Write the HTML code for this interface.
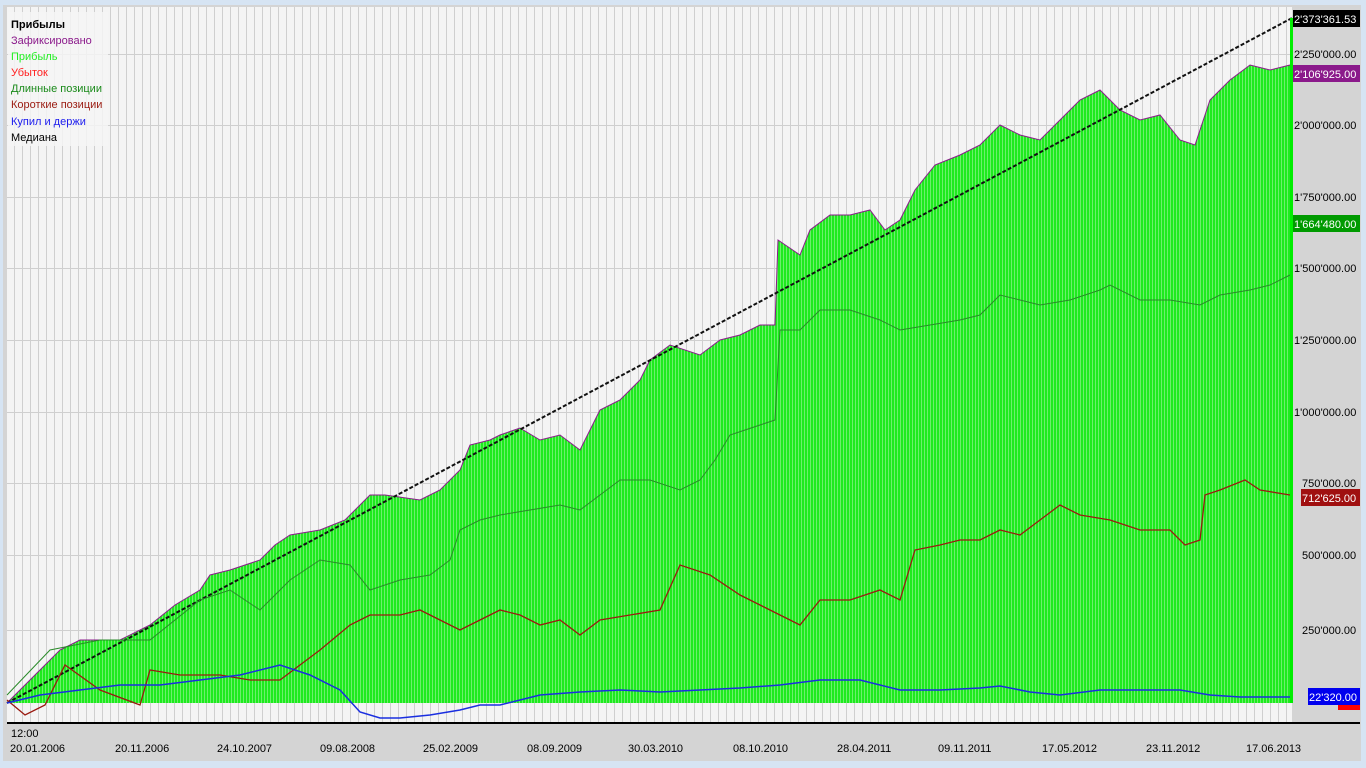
<!DOCTYPE html>
<html><head><meta charset="utf-8"><style>
html,body{margin:0;padding:0;width:1366px;height:768px;overflow:hidden;background:#d6e4f3;}
#frame{position:absolute;left:3px;top:5px;width:1358px;height:756px;background:#d4d4d4;}
svg{position:absolute;left:0;top:0;}
.t{font-family:"Liberation Sans",sans-serif;font-size:11px;}
</style></head><body>
<div id="frame"></div>
<svg width="1366" height="768" xmlns="http://www.w3.org/2000/svg">
<defs>
<pattern id="vg" x="7" y="0" width="8" height="10" patternUnits="userSpaceOnUse">
<rect width="8" height="10" fill="#f4f4f4"/><rect x="7" width="1" height="10" fill="#cfcfcf"/>
</pattern>
<pattern id="gb" x="7" y="0" width="3" height="10" patternUnits="userSpaceOnUse">
<rect width="3" height="10" fill="#1eea1e"/><rect x="2" width="1" height="10" fill="#6cf06c"/>
</pattern>
</defs>
<rect x="7" y="7" width="1285" height="716" fill="url(#vg)"/>
<g stroke="#cfcfcf" stroke-width="1">
<line x1="7" y1="54.5" x2="1292" y2="54.5"/><line x1="7" y1="125.5" x2="1292" y2="125.5"/>
<line x1="7" y1="197.5" x2="1292" y2="197.5"/><line x1="7" y1="268.5" x2="1292" y2="268.5"/>
<line x1="7" y1="340.5" x2="1292" y2="340.5"/><line x1="7" y1="412.5" x2="1292" y2="412.5"/>
<line x1="7" y1="483.5" x2="1292" y2="483.5"/><line x1="7" y1="555.5" x2="1292" y2="555.5"/>
<line x1="7" y1="630.5" x2="1292" y2="630.5"/>
</g>
<polygon fill="url(#gb)" points="7,703 30,680 60,650 80,640 120,640 150,625 175,605 200,590 210,575 230,570 260,560 275,545 290,535 320,530 345,520 370,495 385,495 420,500 440,490 460,470 470,445 490,440 500,435 520,428 540,440 560,435 580,450 590,430 600,410 620,400 640,380 650,360 670,345 700,355 720,340 740,335 760,325 775,325 778,240 800,255 810,230 830,215 850,215 870,210 885,230 900,220 915,190 935,165 960,155 980,145 1000,125 1020,135 1040,140 1060,120 1080,100 1100,90 1120,110 1140,120 1160,115 1180,140 1195,145 1210,100 1230,80 1250,65 1270,70 1290,65 1292,18 1292,703"/>
<polyline fill="none" stroke="#8b1a8b" stroke-width="1" points="7,703 30,680 60,650 80,640 120,640 150,625 175,605 200,590 210,575 230,570 260,560 275,545 290,535 320,530 345,520 370,495 385,495 420,500 440,490 460,470 470,445 490,440 500,435 520,428 540,440 560,435 580,450 590,430 600,410 620,400 640,380 650,360 670,345 700,355 720,340 740,335 760,325 775,325 778,240 800,255 810,230 830,215 850,215 870,210 885,230 900,220 915,190 935,165 960,155 980,145 1000,125 1020,135 1040,140 1060,120 1080,100 1100,90 1120,110 1140,120 1160,115 1180,140 1195,145 1210,100 1230,80 1250,65 1270,70 1290,65"/>
<line x1="7" y1="703" x2="1292" y2="18" stroke="#111" stroke-width="2" stroke-dasharray="4,2"/>
<polyline fill="none" stroke="#2a8a2a" stroke-width="1" points="7,695 50,650 100,640 150,640 200,600 230,590 260,610 290,580 320,560 350,565 370,590 400,580 430,575 450,560 460,530 480,520 500,515 530,510 560,505 580,510 600,495 620,480 650,480 680,490 700,480 715,460 730,435 760,425 775,420 780,330 800,330 820,310 850,310 880,320 900,330 930,325 960,320 980,315 1000,295 1020,300 1040,305 1070,300 1100,290 1110,285 1140,300 1170,300 1200,305 1220,295 1250,290 1270,285 1290,275"/>
<polyline fill="none" stroke="#9a1a10" stroke-width="1.3" points="7,700 25,715 45,705 65,665 100,690 140,705 150,670 180,675 220,675 250,680 280,680 300,665 320,650 350,625 370,615 400,615 420,610 440,620 460,630 480,620 500,610 520,615 540,625 560,620 580,635 600,620 630,615 660,610 680,565 710,575 740,595 770,610 800,625 820,600 850,600 880,590 900,600 915,550 940,545 960,540 980,540 1000,530 1020,535 1040,520 1060,505 1080,515 1110,520 1140,530 1170,530 1185,545 1200,540 1205,495 1220,490 1245,480 1260,490 1290,495"/>
<polyline fill="none" stroke="#1a2ee0" stroke-width="1.5" points="7,703 40,695 80,690 120,685 160,685 200,680 240,675 280,665 310,675 340,690 360,712 380,718 400,718 430,715 460,710 480,705 500,705 520,700 540,695 580,692 620,690 660,692 700,690 740,688 780,685 820,680 860,680 900,690 940,690 980,688 1000,686 1030,692 1060,695 1100,690 1140,690 1180,690 1210,695 1240,697 1290,697"/>
<rect x="1290" y="18" width="3" height="685" fill="#00ee00"/>
<rect x="7" y="722" width="1353" height="2" fill="#000"/>
<rect x="8" y="12" width="100" height="134" fill="#f4f4f4" opacity="0.85"/>
<g class="t">
<text x="11" y="28" font-weight="bold" fill="#000">Прибылы</text>
<text x="11" y="44" fill="#8b1a8b">Зафиксировано</text>
<text x="11" y="60" fill="#22ee22">Прибыль</text>
<text x="11" y="76" fill="#ff2020">Убыток</text>
<text x="11" y="92" fill="#1a8a1a">Длинные позиции</text>
<text x="11" y="108" fill="#9a1a10">Короткие позиции</text>
<text x="11" y="125" fill="#1a1aee">Купил и держи</text>
<text x="11" y="141" fill="#000">Медиана</text>
</g>
<g class="t" fill="#000">
<text x="1294" y="58">2'250'000.00</text>
<text x="1294" y="129">2'000'000.00</text>
<text x="1294" y="201">1'750'000.00</text>
<text x="1294" y="272">1'500'000.00</text>
<text x="1294" y="344">1'250'000.00</text>
<text x="1294" y="416">1'000'000.00</text>
<text x="1302" y="487">750'000.00</text>
<text x="1302" y="559">500'000.00</text>
<text x="1302" y="634">250'000.00</text>
</g>
<rect x="1293" y="10" width="67" height="17" fill="#000"/>
<text class="t" x="1294" y="23" fill="#fff">2'373'361.53</text>
<rect x="1293" y="65" width="67" height="17" fill="#8b1a8b"/>
<text class="t" x="1294" y="78" fill="#fff">2'106'925.00</text>
<rect x="1293" y="215" width="67" height="17" fill="#009a00"/>
<text class="t" x="1294" y="228" fill="#fff">1'664'480.00</text>
<rect x="1301" y="489" width="59" height="17" fill="#a01010"/>
<text class="t" x="1302" y="502" fill="#fff">712'625.00</text>
<rect x="1338" y="702" width="22" height="8" fill="#ff0000"/>
<rect x="1308" y="688" width="52" height="17" fill="#0000ee"/>
<text class="t" x="1309" y="701" fill="#fff">22'320.00</text>
<g class="t" fill="#000">
<text x="11" y="737">12:00</text>
<text x="10" y="752">20.01.2006</text>
<text x="115" y="752">20.11.2006</text>
<text x="217" y="752">24.10.2007</text>
<text x="320" y="752">09.08.2008</text>
<text x="423" y="752">25.02.2009</text>
<text x="527" y="752">08.09.2009</text>
<text x="628" y="752">30.03.2010</text>
<text x="733" y="752">08.10.2010</text>
<text x="837" y="752">28.04.2011</text>
<text x="938" y="752">09.11.2011</text>
<text x="1042" y="752">17.05.2012</text>
<text x="1146" y="752">23.11.2012</text>
<text x="1246" y="752">17.06.2013</text>
</g>
</svg>
</body></html>
